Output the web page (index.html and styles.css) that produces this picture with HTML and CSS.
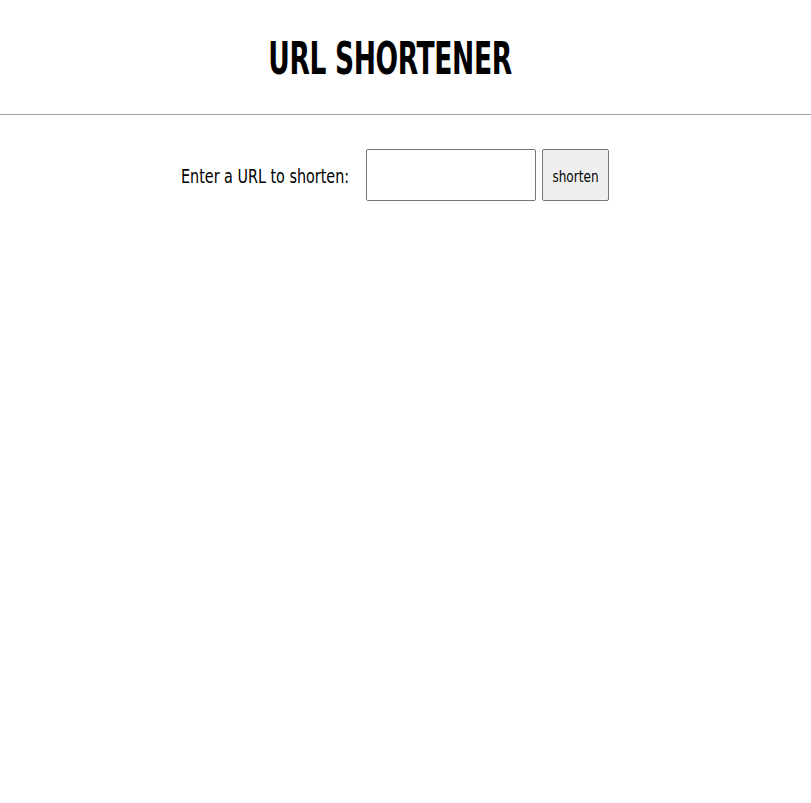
FILE: index.html
```html
<!DOCTYPE html>
<html>
<head>
<meta charset="utf-8">
<link rel="stylesheet" href="styles.css">
</head>
<body>
<header class="header">
  <h1 class="title"><span class="title-text">URL SHORTENER</span></h1>
</header>
<main class="main">
  <form class="form">
    <label class="label" for="url"><span class="label-text">Enter a URL to shorten:</span></label>
    <input class="input" id="url" type="text">
    <button class="button" type="button"><span class="button-text">shorten</span></button>
  </form>
</main>
</body>
</html>
```
FILE: styles.css
```css
html, body {
  margin: 0;
  padding: 0;
  background: #fff;
}
body {
  font-family: "DejaVu Sans Condensed", "DejaVu Sans", sans-serif;
  color: #000;
}
.header {
  height: 115px;
  border-bottom: 1px solid #9e9e9e;
  box-sizing: border-box;
  display: flex;
  justify-content: center;
  padding-right: 30px;
}
.title {
  margin: 0;
  padding-top: 34px;
  font-size: 45px;
  font-weight: bold;
  line-height: 50px;
  letter-spacing: -0.5px;
}
.title-text {
  display: inline-block;
  transform: scaleX(0.655);
  transform-origin: center center;
}
.main {
  display: flex;
  justify-content: center;
  padding-top: 34px;
  padding-right: 21px;
}
.form {
  display: flex;
  align-items: center;
  gap: 6px;
  margin: 0;
}
.label {
  width: 168px;
  margin-right: 11px;
  padding-top: 2px;
  font-size: 19px;
  white-space: nowrap;
}
.label-text {
  display: inline-block;
  transform: scaleX(0.84);
  transform-origin: left center;
}
.input {
  width: 170px;
  height: 52px;
  box-sizing: border-box;
  border: 1px solid #767676;
  border-radius: 2px;
  padding: 0 4px;
  margin: 0;
  background: #fff;
}
.button {
  width: 67px;
  height: 52px;
  box-sizing: border-box;
  border: 1px solid #767676;
  border-radius: 2px;
  background: #efefef;
  font-family: inherit;
  font-size: 16px;
  color: #000;
  padding: 2px 0 0;
  margin: 0;
  white-space: nowrap;
}
.button-text {
  display: inline-block;
  transform: scaleX(0.84);
}
```
